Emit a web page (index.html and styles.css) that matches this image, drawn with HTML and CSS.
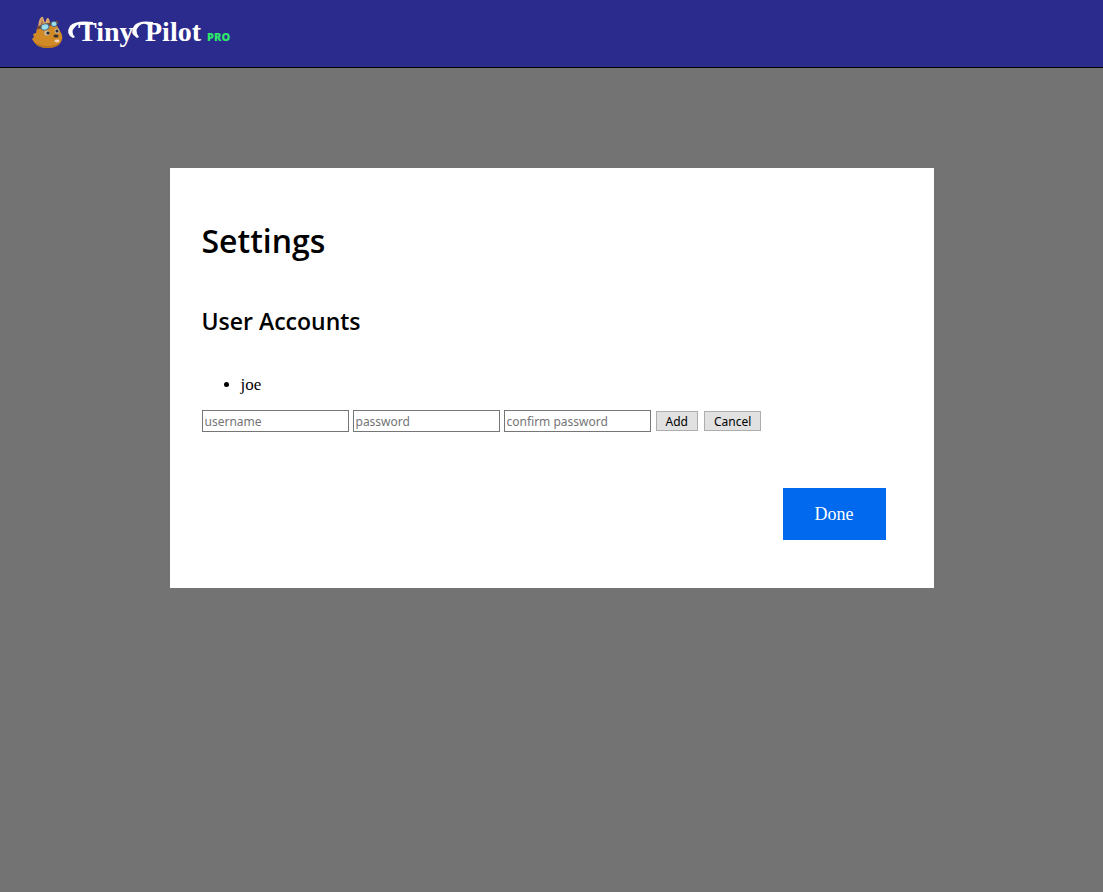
FILE: index.html
```html
<!DOCTYPE html>
<html lang="en">
<head>
<meta charset="utf-8">
<title>TinyPilot</title>
<link rel="stylesheet" href="styles.css">
</head>
<body>
<header class="header">
  <svg class="logo" width="202" height="38" viewBox="0 0 202 38" role="img" aria-label="TinyPilot Pro">
    <path fill="#dfa66c" d="M7 13 8 7Q10 2 12 3L14 9 16 4Q19 3 19 11L15 15Z"/>
    <path fill="#ad7650" d="M9 12 11 5l2 7z"/>
    <path fill="#d18a26" d="M6 14Q14 6 25 10L29 17Q33 23 30 28Q27 33 17 34Q7 34 3 28L1 25 3 23 2 20 5 19Z"/>
    <path fill="#b97520" d="M3 28q7 4 14 4 8 0 13-4-3 6-13 6-10 0-14-6z"/>
    <path stroke="#764736" stroke-width="3" d="m6 14 21-6"/>
    <ellipse cx="14" cy="13" rx="4" ry="3" fill="#9ddff1" stroke="#466b84" transform="rotate(-16 14 13)"/>
    <ellipse cx="23" cy="10" rx="3" ry="2.6" fill="#9ddff1" stroke="#466b84"/>
    <circle cx="16" cy="19" r="2.6" fill="#c9c0ae"/><circle cx="17" cy="19" r="1.6" fill="#292833"/>
    <circle cx="26" cy="17" r="2.4" fill="#c9c0ae"/><circle cx="26" cy="17" r="1.5" fill="#292833"/>
    <ellipse cx="25" cy="22" rx="2.6" ry="1.5" fill="#383030"/>
    <ellipse cx="26" cy="27" rx="2.5" ry="1.4" fill="#efd6bd"/>
    <text class="wordmark" x="47" y="27">Tiny</text>
    <text class="wordmark" x="114" y="27">Pilot</text>
    <path fill="#fff" d="M62 8Q44 6 39 12Q34 20 42 24L44 23Q39 18 44 13Q47 9 51 11L62 10Z"/>
    <path fill="#fff" d="M122 8Q107 6 103 12Q98 19 106 24L108 23Q103 17 108 12Q112 8 117 11L122 10Z"/>
    <text class="edition" x="176" y="27">PRO</text>
  </svg>
</header>
<main class="backdrop">
  <section class="dialog" aria-labelledby="settings-title">
    <h1 class="title" id="settings-title">Settings</h1>
    <h2 class="subtitle">User Accounts</h2>
    <ul class="users"><li>joe</li></ul>
    <form class="account-form">
      <input class="field" type="text" placeholder="username" aria-label="username">
      <input class="field" type="password" placeholder="password" aria-label="password">
      <input class="field" type="password" placeholder="confirm password" aria-label="confirm password">
      <span class="form-actions">
        <button class="small-button" type="button">Add</button>
        <button class="small-button" type="button">Cancel</button>
      </span>
    </form>
    <div class="actions"><button class="done" type="button">Done</button></div>
  </section>
</main>
</body>
</html>
```
FILE: styles.css
```css
* { box-sizing: border-box; }
body {
  margin: 0;
  min-height: 100vh;
  display: flex;
  flex-direction: column;
  background: #737373;
  color: #000;
  font-family: "Liberation Serif", serif;
}
.header {
  padding: 14px 31px 15px;
  background: #2b2a8d;
  border-bottom: 1px solid #000;
}
.logo { display: block; }
.wordmark {
  font: bold 28px "Liberation Serif", serif;
  fill: #fff;
}
.edition {
  font: 800 11px "Open Sans", sans-serif;
  fill: #2ee66b;
}
.backdrop { flex: 1; padding: 100px 16px; }
.dialog {
  max-width: 764px;
  margin: 0 auto;
  padding: 48px 32px;
  background: #fff;
}
.title, .subtitle {
  margin: 0;
  font-family: "Open Sans", sans-serif;
  font-weight: 600;
}
.title { font-size: 32px; line-height: 50px; }
.subtitle { margin-top: 39px; font-size: 23px; line-height: 32px; }
.users {
  margin: 35px 0 12px;
  padding-left: 39px;
  font-size: 17px;
  line-height: 26px;
}
.account-form { display: flex; flex-wrap: wrap; align-items: center; gap: 4px; }
.field, .small-button { font: 12px "Noto Sans", sans-serif; }
.field {
  width: 147px;
  height: 22px;
  padding: 1px 2px;
  border: 1px solid #767676;
  border-radius: 0;
  background: #fff;
}
.field::placeholder { color: #757575; }
.form-actions { display: flex; gap: 6px; padding-left: 1px; }
.small-button {
  height: 20px;
  padding: 0 9px;
  border: 1px solid #adadad;
  border-radius: 0;
  background: #e1e1e1;
  color: #000;
}
.actions { display: flex; justify-content: flex-end; margin-top: 56px; padding-right: 16px; }
.done {
  height: 52px;
  padding: 0 32px;
  border: 0;
  background: #0069ed;
  color: #fff;
  font: 18px "Liberation Serif", serif;
}
```
